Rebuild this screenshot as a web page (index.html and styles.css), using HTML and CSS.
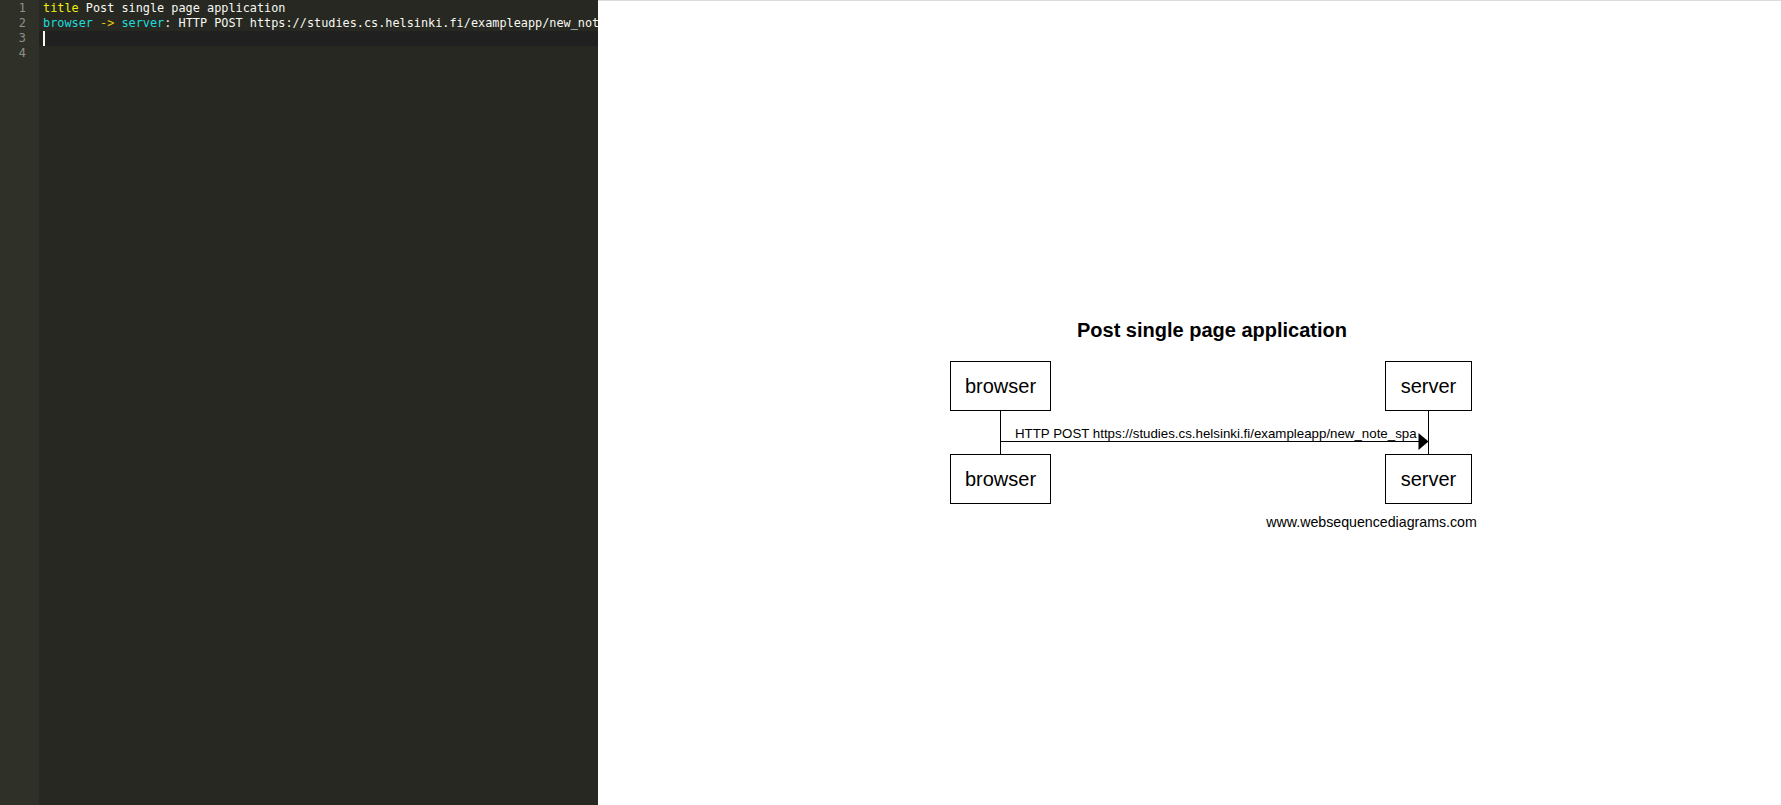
FILE: index.html
```html
<!DOCTYPE html>
<html>
<head>
<meta charset="utf-8">
<title>Post single page application</title>
<link rel="stylesheet" href="styles.css">
</head>
<body>
<div class="app">
  <div class="editor">
    <div class="gutter">
      <div class="ln">1</div>
      <div class="ln">2</div>
      <div class="ln">3</div>
      <div class="ln">4</div>
    </div>
    <div class="code">
      <div class="line"><span class="kw">title</span> Post single page application</div>
      <div class="line"><span class="actor">browser</span> <span class="op">-&gt;</span> <span class="actor">server</span>: HTTP POST https://studies.cs.helsinki.fi/exampleapp/new_note_spa</div>
      <div class="line active"><span class="cursor"></span></div>
      <div class="line"></div>
    </div>
  </div>
  <div class="preview">
    <svg class="diagram" width="550" height="230" viewBox="0 0 550 230" xmlns="http://www.w3.org/2000/svg">
      <text class="d-title" x="272" y="27" text-anchor="middle">Post single page application</text>
      <rect x="10.5" y="51.5" width="100" height="49" class="box"/>
      <rect x="445.5" y="51.5" width="86" height="49" class="box"/>
      <rect x="10.5" y="144.5" width="100" height="49" class="box"/>
      <rect x="445.5" y="144.5" width="86" height="49" class="box"/>
      <line x1="60.5" y1="101" x2="60.5" y2="144" class="life"/>
      <line x1="488.5" y1="101" x2="488.5" y2="144" class="life"/>
      <text class="d-actor" x="60.5" y="83" text-anchor="middle">browser</text>
      <text class="d-actor" x="488.5" y="83" text-anchor="middle">server</text>
      <text class="d-actor" x="60.5" y="176" text-anchor="middle">browser</text>
      <text class="d-actor" x="488.5" y="176" text-anchor="middle">server</text>
      <line x1="60.5" y1="131.5" x2="480" y2="131.5" class="life"/>
      <polygon points="478.5,123 488.5,131.5 478.5,140" fill="#000"/>
      <text class="d-msg" x="75" y="127.5">HTTP POST https://studies.cs.helsinki.fi/exampleapp/new_note_spa</text>
      <text class="d-credit" x="536.8" y="217" text-anchor="end">www.websequencediagrams.com</text>
    </svg>
  </div>
</div>
</body>
</html>
```
FILE: styles.css
```css
html, body {
  margin: 0;
  padding: 0;
  background: #ffffff;
}
.app {
  display: flex;
  width: 1781px;
  height: 805px;
  overflow: hidden;
}
.editor {
  width: 598px;
  flex: none;
  display: flex;
  background: #272822;
  font-family: "DejaVu Sans Mono", monospace;
  font-size: 11.85px;
  line-height: 15px;
  overflow: hidden;
}
.gutter {
  width: 39px;
  flex: none;
  background: #2f3129;
  color: #8f908a;
  box-sizing: border-box;
  padding: 1px 13px 0 0;
  text-align: right;
}
.ln {
  height: 15px;
}
.code {
  flex: 1;
  min-width: 0;
  padding-top: 1px;
  color: #f8f8f2;
  overflow: hidden;
}
.line {
  height: 15px;
  padding-left: 4px;
  white-space: pre;
}
.line.active {
  background: #202020;
}
.kw {
  color: #eef00a;
}
.actor {
  color: #1edcdc;
}
.op {
  color: #e8c80c;
}
.cursor {
  display: inline-block;
  width: 2px;
  height: 15px;
  background: #f8f8f0;
  vertical-align: top;
}
.preview {
  flex: 1;
  border-top: 1px solid #dcdcdc;
  display: flex;
  align-items: center;
  justify-content: center;
  padding: 44px 0 0 51px;
  box-sizing: border-box;
}
.diagram {
  display: block;
  flex: none;
}
.box {
  fill: #ffffff;
  stroke: #000000;
  stroke-width: 1;
}
.life {
  stroke: #000000;
  stroke-width: 1;
}
.d-title {
  font-family: "Liberation Sans", Arial, sans-serif;
  font-weight: bold;
  font-size: 20px;
  fill: #000;
}
.d-actor {
  font-family: "Liberation Sans", Arial, sans-serif;
  font-size: 20px;
  fill: #000;
}
.d-msg {
  font-family: "Liberation Sans", Arial, sans-serif;
  font-size: 13.3px;
  fill: #000;
}
.d-credit {
  font-family: "Liberation Sans", Arial, sans-serif;
  font-size: 14.2px;
  fill: #000;
}
```
